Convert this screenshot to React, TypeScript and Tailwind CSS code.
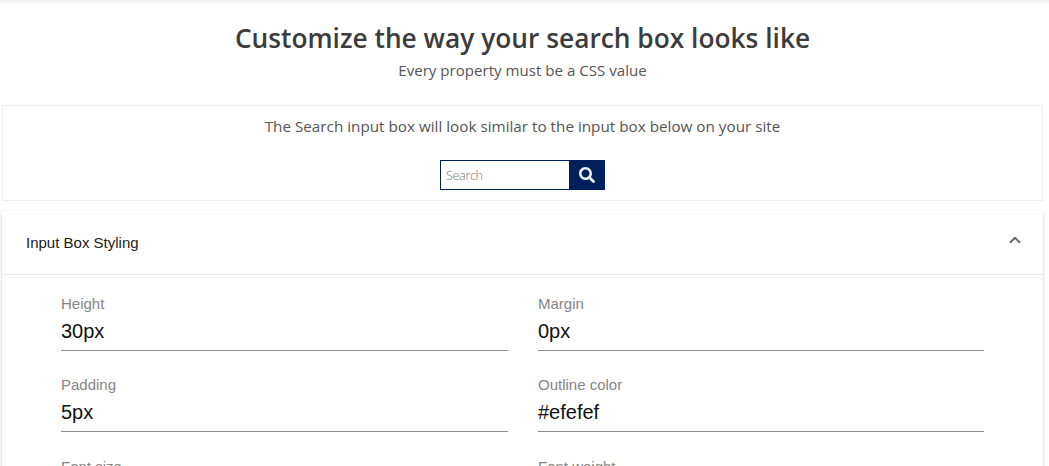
import { ChevronUp } from "lucide-react";
import { FaSearch } from "react-icons/fa";

const fields = [
  { label: "Height", value: "30px" },
  { label: "Margin", value: "0px" },
  { label: "Padding", value: "5px" },
  { label: "Outline color", value: "#efefef" },
  { label: "Font size", value: "14px" },
  { label: "Font weight", value: "400" },
];

function Field({ label, value }: { label: string; value: string }) {
  return (
    <div className="h-[81.5px]">
      <div className="h-[18px] text-[15px] leading-[18px] text-[#858585]">{label}</div>
      <input
        readOnly
        value={value}
        className="mt-[3.4px] block h-[35px] w-full border-b border-[#8c8c8c] bg-transparent pb-[3px] text-[20px] text-[#111] outline-none"
      />
    </div>
  );
}

export default function App() {
  return (
    <div className="h-[466px] overflow-hidden bg-white font-['Open_Sans',sans-serif] text-[#444]">
      <div className="h-[5px] bg-gradient-to-b from-[#f1f1f5] to-white" />

      <header className="pr-[4px] text-center">
        <h1 className="mt-[15px] text-[26.3px] font-semibold leading-[36px] text-[#3c3c3c]">
          Customize the way your search box looks like
        </h1>
        <p className="mt-[2px] text-[15.1px] leading-[24px] text-[#555]">Every property must be a CSS value</p>
      </header>

      <section className="mx-[2px] mt-[23px] h-[96px] w-[1041px] border border-[#eeeeee] text-center">
        <p className="mt-[9px] mb-[23px] text-[15.26px] leading-[22px] text-[#555]">
          The Search input box will look similar to the input box below on your site
        </p>
        <div className="flex justify-center">
          <input
            readOnly
            placeholder="Search"
            className="h-[30px] w-[130px] border border-[#00205b] px-[5px] text-[12.5px] font-light tracking-[-0.3px] outline-none placeholder:text-[#777]"
          />
          <button className="flex h-[30px] w-[35px] items-center justify-center bg-[#00205b] pr-[1px]">
            <FaSearch className="h-[16px] w-[16px] text-[#eef2f7]" />
          </button>
        </div>
      </section>

      <section className="mx-[2px] mt-[10px] w-[1041px] rounded-[2px] bg-white font-['Liberation_Sans',sans-serif] shadow-[0_1px_3px_rgba(0,0,0,0.25)]">
        <div className="flex h-[64px] items-center justify-between border-b border-[#e8e8e8] pl-[24px] pr-[19px]">
          <span className="pt-[1px] text-[15px] text-[#222]">Input Box Styling</span>
          <ChevronUp className="mb-[6px] h-[18px] w-[18px] text-[#666]" strokeWidth={2.4} />
        </div>
        <div className="grid grid-cols-[447px_446px] gap-x-[30px] pl-[59px] pt-[19.6px]">
          {fields.map((f) => (
            <Field key={f.label} label={f.label} value={f.value} />
          ))}
        </div>
      </section>
    </div>
  );
}
